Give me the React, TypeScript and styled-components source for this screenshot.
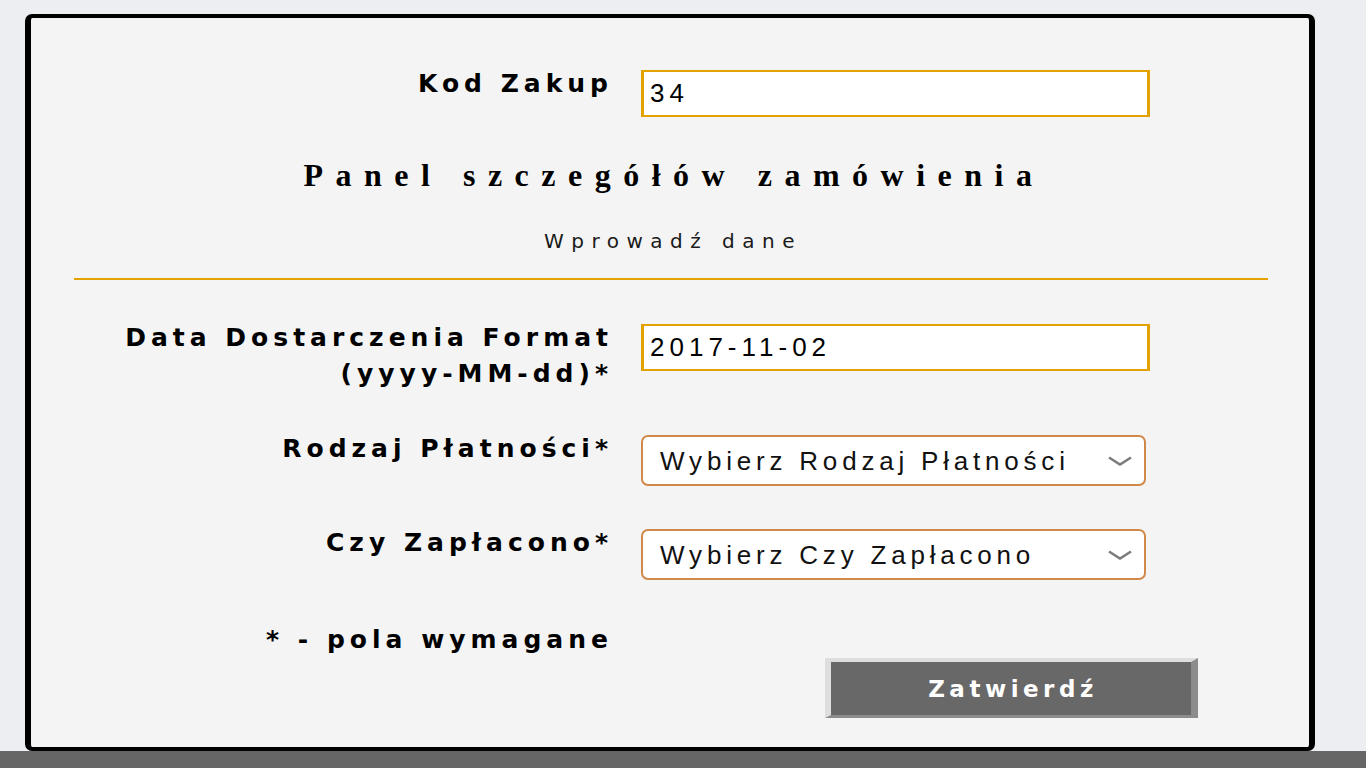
import React, { useState } from 'react';
import styled, { createGlobalStyle } from 'styled-components';

const GlobalStyle = createGlobalStyle`
  html, body {
    margin: 0;
    padding: 0;
    background: #edeef2;
  }
  body {
    font-family: "DejaVu Sans", sans-serif;
  }
`;

const Page = styled.div`
  min-height: 100vh;
  display: flex;
  flex-direction: column;
`;

const Panel = styled.div`
  box-sizing: border-box;
  width: 1290px;
  margin: 14px 0 0 25px;
  flex-shrink: 0;
  background: #f4f4f4;
  border: solid #000;
  border-width: 4px 6px;
  border-radius: 7px;
  padding: 48px 0 29px;
`;

const FieldRow = styled.div<{ $top?: number }>`
  display: grid;
  grid-template-columns: 582px 509px;
  column-gap: 28px;
  align-items: start;
  margin-top: ${p => p.$top || 0}px;
`;

const Label = styled.label`
  font: bold 25px/36px "DejaVu Sans", sans-serif;
  letter-spacing: 5px;
  text-align: right;
  color: #000;
`;

const Input = styled.input`
  box-sizing: border-box;
  width: 509px;
  height: 47px;
  margin: 4px 0 0;
  border: 2px solid #e3a200;
  border-left-width: 3px;
  border-right-width: 3px;
  padding: 0 6px;
  background: #fff;
  font: 26px "Liberation Sans", Arial, sans-serif;
  letter-spacing: 5px;
  color: #000;
  outline: none;
`;

const SelectBox = styled.div`
  position: relative;
  width: 505px;
  margin-top: 4px;
`;

const Select = styled.select`
  appearance: none;
  box-sizing: border-box;
  width: 100%;
  height: 51px;
  border: 2px solid #d0894a;
  border-radius: 7px;
  background: #fff;
  padding: 0 50px 0 17px;
  font: 26px "Liberation Sans", Arial, sans-serif;
  letter-spacing: 4.8px;
  color: #111;
  outline: none;
`;

const Chevron = styled.svg`
  position: absolute;
  right: 14px;
  top: 21px;
  pointer-events: none;
`;

const Heading = styled.h2`
  margin: 38px 0 0;
  padding-left: 8px;
  text-align: center;
  font: bold 32px/40px "Liberation Serif", "Times New Roman", serif;
  letter-spacing: 12.5px;
  color: #000;
`;

const Sub = styled.p`
  margin: 34px 0 0;
  padding-left: 6px;
  text-align: center;
  font: 20px/24px "DejaVu Sans", sans-serif;
  letter-spacing: 7.5px;
  color: #1a1a1a;
`;

const Divider = styled.hr`
  margin: 25px 41px 0 43px;
  border: 0;
  height: 2px;
  background: #e3a200;
`;

const ButtonRow = styled.div`
  display: flex;
  justify-content: flex-end;
  padding-right: 111px;
`;

const Button = styled.button`
  box-sizing: border-box;
  width: 373px;
  height: 60px;
  background: #686868;
  border-style: solid;
  border-width: 4px 7px 3px 6px;
  border-color: #dedede #8c8c8c #8c8c8c #dedede;
  padding: 0 0 0 4px;
  color: #fff;
  font: bold 23px "DejaVu Sans", sans-serif;
  letter-spacing: 4.5px;
  cursor: pointer;
`;

const Footer = styled.div`
  flex: 1;
  min-height: 17px;
  background: #666;
`;

const Dropdown: React.FC<{ placeholder: string }> = ({ placeholder }) => (
  <SelectBox>
    <Select defaultValue="">
      <option value="">{placeholder}</option>
    </Select>
    <Chevron width="24" height="10" viewBox="0 0 24 10">
      <polyline points="1,1.5 12,8.5 23,1.5" fill="none" stroke="#7c7c7c" strokeWidth="2.6" />
    </Chevron>
  </SelectBox>
);

const App: React.FC = () => {
  const [code, setCode] = useState('34');
  const [date, setDate] = useState('2017-11-02');

  return (
    <Page>
      <GlobalStyle />
      <Panel>
        <FieldRow>
          <Label>Kod Zakup</Label>
          <Input type="text" value={code} onChange={e => setCode(e.target.value)} />
        </FieldRow>
        <Heading>Panel szczegółów zamówienia</Heading>
        <Sub>Wprowadź dane</Sub>
        <Divider />
        <FieldRow $top={40}>
          <Label>
            Data Dostarczenia Format
            <br />
            (yyyy-MM-dd)*
          </Label>
          <Input type="text" value={date} onChange={e => setDate(e.target.value)} />
        </FieldRow>
        <FieldRow $top={39}>
          <Label>Rodzaj Płatności*</Label>
          <Dropdown placeholder="Wybierz Rodzaj Płatności" />
        </FieldRow>
        <FieldRow $top={39}>
          <Label>Czy Zapłacono*</Label>
          <Dropdown placeholder="Wybierz Czy Zapłacono" />
        </FieldRow>
        <FieldRow $top={42}>
          <Label>* - pola wymagane</Label>
        </FieldRow>
        <ButtonRow>
          <Button type="button">Zatwierdź</Button>
        </ButtonRow>
      </Panel>
      <Footer />
    </Page>
  );
};

export default App;
